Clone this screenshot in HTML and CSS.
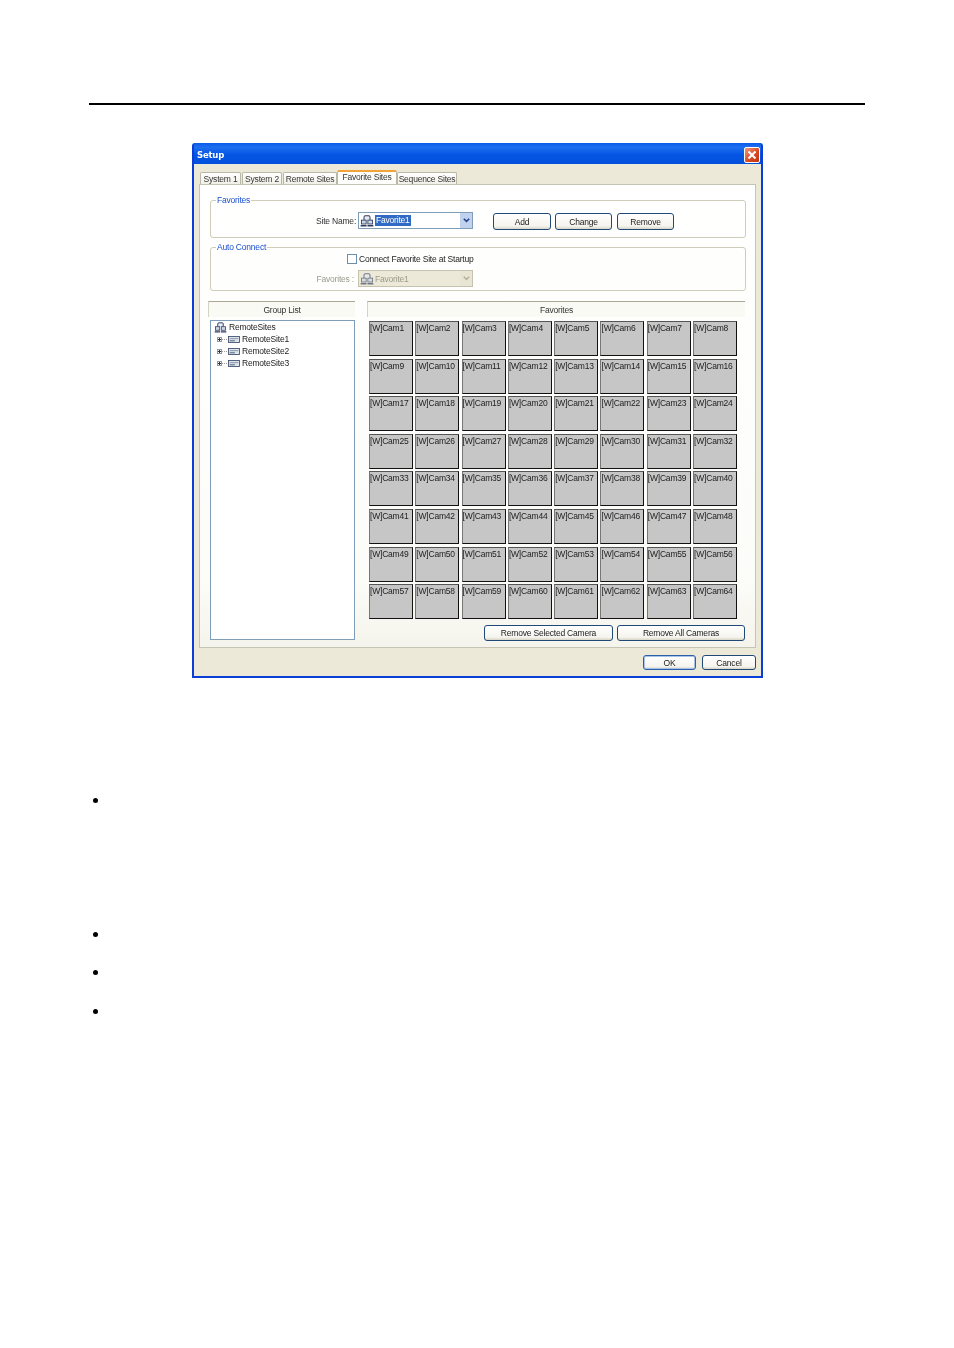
FILE: index.html
```html
<!DOCTYPE html>
<html lang="en">
<head>
<meta charset="utf-8">
<title>Setup</title>
<link rel="stylesheet" href="styles.css">
</head>
<body>
<div class="page">
  <hr class="rule">
  <section class="window">
    <header class="titlebar">
      <span class="title">Setup</span>
      <span class="close"><svg viewBox="0 0 16 16" width="16" height="16"><path d="M4 4l8 8M12 4l-8 8" stroke="#fff" stroke-width="2.4" fill="none"/></svg></span>
    </header>
    <div class="client">
      <nav class="tabs">
        <span class="tab t1">System 1</span>
        <span class="tab t2">System 2</span>
        <span class="tab t3">Remote Sites</span>
        <span class="tab active">Favorite Sites</span>
        <span class="tab t5">Sequence Sites</span>
      </nav>
      <div class="panel">
        <fieldset class="group fav">
          <legend>Favorites</legend>
          <label class="field-label">Site Name:</label>
          <span class="combo">
            <svg class="site-icon" viewBox="0 0 16 14" width="14" height="12"><use href="#site"/></svg>
            <span class="selected">Favorite1</span>
            <span class="arrow"><svg viewBox="0 0 10 10" width="9" height="9"><path d="M2 3l3 3 3-3" stroke="#27408b" stroke-width="1.8" fill="none"/></svg></span>
          </span>
          <button class="btn add">Add</button>
          <button class="btn change">Change</button>
          <button class="btn remove">Remove</button>
        </fieldset>
        <fieldset class="group auto">
          <legend>Auto Connect</legend>
          <div class="auto-row first">
            <span class="check"></span><span>Connect Favorite Site at Startup</span>
          </div>
          <div class="auto-row second">
            <label class="field-label off">Favorites :</label>
            <span class="combo disabled">
              <svg class="site-icon" viewBox="0 0 16 14" width="14" height="12"><use href="#site"/></svg>
              <span class="val">Favorite1</span>
              <span class="arrow"><svg viewBox="0 0 10 10" width="9" height="9"><path d="M2 3l3 3 3-3" stroke="#b5b29f" stroke-width="1.8" fill="none"/></svg></span>
            </span>
          </div>
        </fieldset>
        <div class="lower">
          <div class="left-col">
            <div class="colhead">Group List</div>
            <div class="tree">
              <div class="node root"><svg viewBox="0 0 16 14" width="13" height="11"><use href="#site"/></svg>RemoteSites</div>
              <div class="node"><span class="plus"></span><span class="dots"></span><svg viewBox="0 0 14 8" width="12" height="7"><use href="#dvr"/></svg>RemoteSite1</div>
              <div class="node"><span class="plus"></span><span class="dots"></span><svg viewBox="0 0 14 8" width="12" height="7"><use href="#dvr"/></svg>RemoteSite2</div>
              <div class="node"><span class="plus"></span><span class="dots"></span><svg viewBox="0 0 14 8" width="12" height="7"><use href="#dvr"/></svg>RemoteSite3</div>
            </div>
          </div>
          <div class="right-col">
            <div class="colhead">Favorites</div>
            <div class="grid">
              <div class="cell">[W]Cam1</div><div class="cell">[W]Cam2</div><div class="cell">[W]Cam3</div><div class="cell">[W]Cam4</div><div class="cell">[W]Cam5</div><div class="cell">[W]Cam6</div><div class="cell">[W]Cam7</div><div class="cell">[W]Cam8</div>
              <div class="cell">[W]Cam9</div><div class="cell">[W]Cam10</div><div class="cell">[W]Cam11</div><div class="cell">[W]Cam12</div><div class="cell">[W]Cam13</div><div class="cell">[W]Cam14</div><div class="cell">[W]Cam15</div><div class="cell">[W]Cam16</div>
              <div class="cell">[W]Cam17</div><div class="cell">[W]Cam18</div><div class="cell">[W]Cam19</div><div class="cell">[W]Cam20</div><div class="cell">[W]Cam21</div><div class="cell">[W]Cam22</div><div class="cell">[W]Cam23</div><div class="cell">[W]Cam24</div>
              <div class="cell">[W]Cam25</div><div class="cell">[W]Cam26</div><div class="cell">[W]Cam27</div><div class="cell">[W]Cam28</div><div class="cell">[W]Cam29</div><div class="cell">[W]Cam30</div><div class="cell">[W]Cam31</div><div class="cell">[W]Cam32</div>
              <div class="cell">[W]Cam33</div><div class="cell">[W]Cam34</div><div class="cell">[W]Cam35</div><div class="cell">[W]Cam36</div><div class="cell">[W]Cam37</div><div class="cell">[W]Cam38</div><div class="cell">[W]Cam39</div><div class="cell">[W]Cam40</div>
              <div class="cell">[W]Cam41</div><div class="cell">[W]Cam42</div><div class="cell">[W]Cam43</div><div class="cell">[W]Cam44</div><div class="cell">[W]Cam45</div><div class="cell">[W]Cam46</div><div class="cell">[W]Cam47</div><div class="cell">[W]Cam48</div>
              <div class="cell">[W]Cam49</div><div class="cell">[W]Cam50</div><div class="cell">[W]Cam51</div><div class="cell">[W]Cam52</div><div class="cell">[W]Cam53</div><div class="cell">[W]Cam54</div><div class="cell">[W]Cam55</div><div class="cell">[W]Cam56</div>
              <div class="cell">[W]Cam57</div><div class="cell">[W]Cam58</div><div class="cell">[W]Cam59</div><div class="cell">[W]Cam60</div><div class="cell">[W]Cam61</div><div class="cell">[W]Cam62</div><div class="cell">[W]Cam63</div><div class="cell">[W]Cam64</div>
            </div>
            <div class="grid-actions">
              <button class="btn sel">Remove Selected Camera</button>
              <button class="btn all">Remove All Cameras</button>
            </div>
          </div>
        </div>
      </div>
      <footer class="dialog-actions">
        <button class="btn ok">OK</button>
        <button class="btn cancel">Cancel</button>
      </footer>
    </div>
  </section>
  <ul class="bullets">
    <li class="b1"></li>
    <li class="b2"></li>
    <li class="b3"></li>
    <li class="b4"></li>
  </ul>
</div>
<svg class="defs" width="0" height="0" aria-hidden="true">
  <symbol id="site" viewBox="0 0 16 14">
    <path d="M4.500 6V2.500Q4.500 1 6 1h4q1.500 0 1.500 1.500V6" fill="#e6ebf5" stroke="#2f3d5c" stroke-width="1.200"/>
    <rect x="1.500" y="6" width="5.500" height="4.500" fill="#cfd8ea" stroke="#2f3d5c"/>
    <rect x="9" y="6" width="5.500" height="4.500" fill="#cfd8ea" stroke="#2f3d5c"/>
    <path d="M0.500 12.500h7M8.500 12.500h7" stroke="#2f3d5c" stroke-width="1.600"/>
  </symbol>
  <symbol id="dvr" viewBox="0 0 14 8">
    <rect x="0.500" y="0.500" width="13" height="7" fill="#dfe3ea" stroke="#3d4c6b"/>
    <path d="M2 3h10" stroke="#7d8aa6"/>
    <path d="M2 5.500h6" stroke="#3d4c6b"/>
  </symbol>
</svg>
</body>
</html>
```
FILE: styles.css
```css
* { box-sizing: border-box; }
html, body { margin: 0; padding: 0; background: #fff; }
body { width: 954px; height: 1348px; overflow: hidden; font-family: "Liberation Sans", Arial, sans-serif; font-size: 8.500px; letter-spacing: -0.2px; color: #222; }
.page { padding: 103px 89px 0; }
.rule { margin: 0; border: 0; height: 2px; background: #000; }
.defs { position: absolute; }

.window { width: 571px; height: 535px; margin: 38px 0 0 103px; background: #0b3ed6; border-radius: 3px 3px 0 0; padding: 0 2px 2px; display: flex; flex-direction: column; filter: blur(0.4px); }
.titlebar { height: 21px; flex: none; display: flex; align-items: center; justify-content: space-between; padding: 3px 1px 0 3px; background: linear-gradient(#0a5be8, #1f6ff0 20%, #0556e4 55%, #0350dd); color: #fff; }
.title { font-family: "DejaVu Sans", sans-serif; font-weight: 700; font-size: 8.500px; }
.close { width: 16px; height: 16px; border-radius: 2px; border: 1px solid #fff; background: linear-gradient(135deg, #ef9a7d, #d9441f 60%, #c1350f); display: flex; align-items: center; justify-content: center; }
.close svg { width: 14px; height: 14px; }

.client { flex: 1; background: #ece9d8; padding: 7px 5px 0 5px; display: flex; flex-direction: column; }
.tabs { display: flex; height: 13px; padding-left: 1px; position: relative; z-index: 1; align-items: flex-end; }
.tab { height: 12px; background: linear-gradient(#fff, #f1efe6); border: 1px solid #b9b8a6; border-bottom: 0; border-radius: 2px 2px 0 0; display: flex; align-items: center; justify-content: center; white-space: nowrap; color: #333; }
.t1 { width: 41px; margin-right: 1px; } .t2 { width: 40px; margin-right: 1px; } .t3 { width: 54px; } .t5 { width: 60px; }
.tab.active { width: 60px; height: 14px; background: #fdfdfb; border-top: 2px solid #f0a43a; border-color: #f0a43a #b9b8a6 transparent; padding-bottom: 2px; }

.panel { height: 464px; flex: none; background: linear-gradient(#fff, #fcfcf9 85%, #f5f4ec); border: 1px solid #c6c4b2; padding: 9px 10px 0 8px; display: flex; flex-direction: column; }

.group { margin: 0 0 0 2px; padding: 0; border: 1px solid #cfcdb9; border-radius: 3px; width: 536px; position: relative; min-width: 0; }
.group legend { margin-left: 5px; padding: 0 1px; color: #1b4fd0; line-height: 9px; }
.fav { height: 42px; margin-top: 2px; display: flex; align-items: flex-start; padding-top: 8px; }
.auto { height: 48px; margin-top: 5px; }
.field-label { margin-left: 105px; width: 38px; white-space: nowrap; line-height: 16px; text-align: right; color: #333; }
.combo { width: 115px; height: 17px; margin-left: 4px; margin-top: -1px; border: 1px solid #7f9db9; background: #fff; display: flex; align-items: center; padding: 0 0 0 1px; flex: none; }
.site-icon { flex: none; margin-right: 1px; }
.selected { background: #316ac5; color: #fff; padding: 0 1px; width: 36px; height: 11px; line-height: 11px; }
.arrow { width: 12px; height: 15px; margin-left: auto; background: #c1d2ee; display: flex; align-items: center; justify-content: center; }

.btn { font-family: "Liberation Sans", Arial, sans-serif; font-size: 8.500px; letter-spacing: -0.2px; color: #222; padding: 0; height: 17px; border: 1px solid #1f4a78; border-radius: 3px; background: linear-gradient(#fff, #f5f4ee 80%, #d8d5c6); }
.add { width: 58px; margin-left: 20px; }
.change { width: 57px; margin-left: 4px; }
.remove { width: 57px; margin-left: 5px; }

.auto-row { display: flex; align-items: center; }
.first { margin: 1px 0 0 136px; height: 11px; }
.second { margin-top: 6px; height: 17px; margin-left: 0; }
.check { width: 10px; height: 10px; border: 1px solid #6f8dae; background: #fff; margin-right: 2px; }
.field-label.off { color: #9b9a8c; margin-left: 105px; }
.second .combo { margin-top: 0; }
.disabled { background: #ece9d8; border-color: #c5c2b0; color: #9b9a8c; }
.disabled .site-icon { opacity: .65; }
.disabled .arrow { background: #e8e5d4; }

.lower { display: flex; margin-top: 10px; }
.left-col { width: 147px; flex: none; }
.right-col { width: 378px; margin-left: 12px; }
.colhead { height: 16px; border-top: 1px solid #aca899; border-left: 1px solid #d5d3c3; background: #fafaf5; text-align: center; line-height: 17px; color: #333; }
.tree { margin: 3px 0 0 2px; width: 145px; height: 320px; background: #fff; border: 1px solid #7f9db9; padding: 0 0 0 3px; }
.node { height: 12px; display: flex; align-items: center; color: #222; white-space: nowrap; }
.root svg { margin-right: 1px; }
.plus { width: 5px; height: 5px; margin-left: 3px; border: 1px solid #919b9c; flex: none; background: linear-gradient(#333,#333) center/3px 1px no-repeat, linear-gradient(#333,#333) center/1px 3px no-repeat; }
.dots { width: 5px; flex: none; margin-right: 1px; border-top: 1px dotted #a0a0a0; }
.node svg { flex: none; margin-right: 2px; }

.grid { margin: 4px 0 0 2px; width: 369px; display: grid; grid-template-columns: repeat(8, 44px); column-gap: 2.300px; grid-auto-rows: 35px; row-gap: 2.600px; }
.cell { background: #c6c6c6; border: 1px solid #111; border-top-color: #555; border-left-color: #777; padding: 2px 0 0 0; white-space: nowrap; overflow: hidden; line-height: 9px; color: #222; }
.grid-actions { display: flex; justify-content: flex-end; gap: 4px; margin-top: 6px; }
.sel { width: 129px; height: 16px; }
.all { width: 128px; height: 16px; }

.dialog-actions { display: flex; justify-content: flex-end; gap: 6px; padding: 7px 0 0; }
.ok { width: 53px; height: 15px; border-color: #2b5fa8; box-shadow: inset 0 0 0 1px #a9c3e8; }
.cancel { width: 54px; height: 15px; }

.bullets { list-style: none; margin: 0; padding: 0; }
.bullets li { width: 5px; height: 5px; border-radius: 50%; background: #000; margin-left: 4px; }
.b1 { margin-top: 120px; }
.b2 { margin-top: 129px; }
.b3 { margin-top: 33px; }
.b4 { margin-top: 34px; }
```
